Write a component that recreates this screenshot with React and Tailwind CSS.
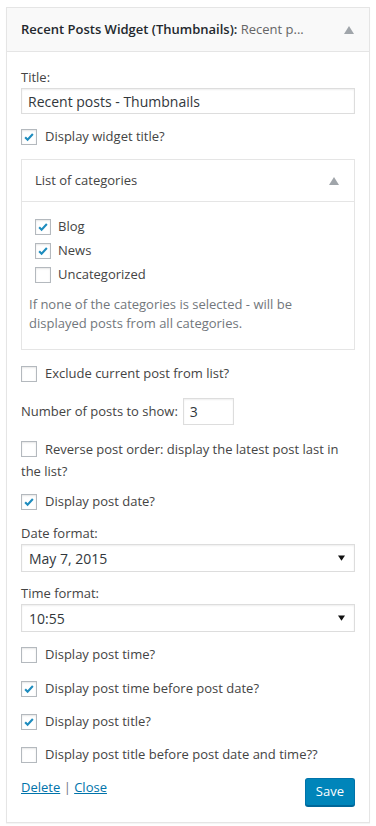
import { useState } from 'react';

function Check({ checked }) {
  return (
    <span className="flex-shrink-0 inline-flex items-center justify-center w-4 h-4 border border-[#b4b9be] bg-white shadow-[inset_0_1px_2px_rgba(0,0,0,0.1)]">
      {checked && (
        <svg viewBox="0 0 16 16" className="w-4 h-4">
          <path d="M3.6 8.2 L6.4 11 L12.4 4.6" fill="none" stroke="#1e8cbe" strokeWidth="2.4" />
        </svg>
      )}
    </span>
  );
}

function CheckRow({ checked, label, className = '' }) {
  return (
    <div className={`flex items-center gap-[8px] h-[19px] ${className}`}>
      <Check checked={checked} />
      <span>{label}</span>
    </div>
  );
}

function Arrow({ className = '' }) {
  return (
    <svg viewBox="0 0 10 8" className={`w-[10px] h-[8px] ${className}`}>
      <path d="M5 0 L10 8 L0 8 Z" fill="#a0a5aa" />
    </svg>
  );
}

function SelectBox({ value }) {
  return (
    <div className="mt-[1px] h-[28px] border border-[#ddd] bg-white flex items-center justify-between pl-[7px] pr-[9px] text-[14px] text-[#32373c] shadow-[inset_0_1px_2px_rgba(0,0,0,0.07)]">
      <span>{value}</span>
      <svg viewBox="0 0 8 6" className="w-[7px] h-[6px]">
        <path d="M0 0 L8 0 L4 6 Z" fill="#111" />
      </svg>
    </div>
  );
}

export default function App() {
  const [categories] = useState([
    { name: 'Blog', checked: true },
    { name: 'News', checked: true },
    { name: 'Uncategorized', checked: false },
  ]);

  return (
    <div className="bg-white min-h-[826px] pt-[7px] pl-[6px] font-['Open_Sans',sans-serif] text-[13px] text-[#444]">
      <div className="w-[364px] border border-[#e5e5e5] shadow-[0_1px_1px_rgba(0,0,0,0.04)]">
        <div className="h-[44px] bg-[#f9f9f9] border-b border-[#e5e5e5] flex items-center justify-between pl-[14px] pr-[15px]">
          <div className="text-[13px] whitespace-nowrap">
            <span className="font-semibold text-[#23282d]">Recent Posts Widget (Thumbnails):</span>
            <span className="text-[#666]"> Recent p...</span>
          </div>
          <Arrow />
        </div>

        <div className="px-[14px] pt-[16px] pb-[16px]">
          <div className="leading-[19px]">Title:</div>
          <div className="mt-[1px] h-[26px] border border-[#ddd] flex items-center px-[6px] text-[14px] text-[#32373c] shadow-[inset_0_1px_2px_rgba(0,0,0,0.07)]">
            Recent posts - Thumbnails
          </div>

          <CheckRow checked label="Display widget title?" className="mt-[13px]" />

          <div className="mt-[13px] border border-[#e5e5e5]">
            <div className="h-[42px] border-b border-[#e5e5e5] flex items-center justify-between pl-[13px] pr-[15px]">
              <span>List of categories</span>
              <Arrow className="w-[9px] h-[8px]" />
            </div>
            <div className="pt-[15px] pb-[16px] px-[7px]">
              <div className="pl-[6px] flex flex-col gap-[5px]">
                {categories.map((c) => (
                  <div key={c.name} className="flex items-center gap-[7px] h-[19px]">
                    <Check checked={c.checked} />
                    <span>{c.name}</span>
                  </div>
                ))}
              </div>
              <p className="mt-[11px] leading-[19px] text-[#72777c]">
                If none of the categories is selected - will be displayed posts from all categories.
              </p>
            </div>
          </div>

          <CheckRow label="Exclude current post from list?" className="mt-[14px]" />

          <div className="mt-[15px] flex items-center gap-[5px]">
            <span>Number of posts to show:</span>
            <div className="w-[51px] h-[27px] border border-[#ddd] flex items-center px-[6px] text-[14px] text-[#32373c] shadow-[inset_0_1px_2px_rgba(0,0,0,0.07)]">
              3
            </div>
          </div>

          <div className="mt-[15px] leading-[19px]">
            <span className="inline-block align-[-3px] mr-[8px]">
              <Check />
            </span>
            Reverse post order: display the latest post last in the list?
          </div>

          <CheckRow checked label="Display post date?" className="mt-[11px]" />

          <div className="mt-[13px] leading-[19px]">Date format:</div>
          <SelectBox value="May 7, 2015" />

          <div className="mt-[12px] leading-[19px]">Time format:</div>
          <SelectBox value="10:55" />

          <CheckRow label="Display post time?" className="mt-[13px]" />
          <CheckRow checked label="Display post time before post date?" className="mt-[15px]" />
          <CheckRow checked label="Display post title?" className="mt-[14px]" />
          <CheckRow label="Display post title before post date and time??" className="mt-[14px]" />

          <div className="mt-[12px] flex items-start justify-between">
            <div className="pt-[2px] leading-[19px]">
              <a href="#" className="text-[#0073aa] underline">Delete</a>
              <span className="text-[#72777c]"> | </span>
              <a href="#" className="text-[#0073aa] underline">Close</a>
            </div>
            <button className="mt-[2px] h-[28px] px-[10px] rounded-[3px] bg-[#0085ba] border border-[#0073aa] border-b-[#006799] text-white text-[13px] shadow-[0_1px_0_#006799]">
              Save
            </button>
          </div>
        </div>
      </div>
    </div>
  );
}
